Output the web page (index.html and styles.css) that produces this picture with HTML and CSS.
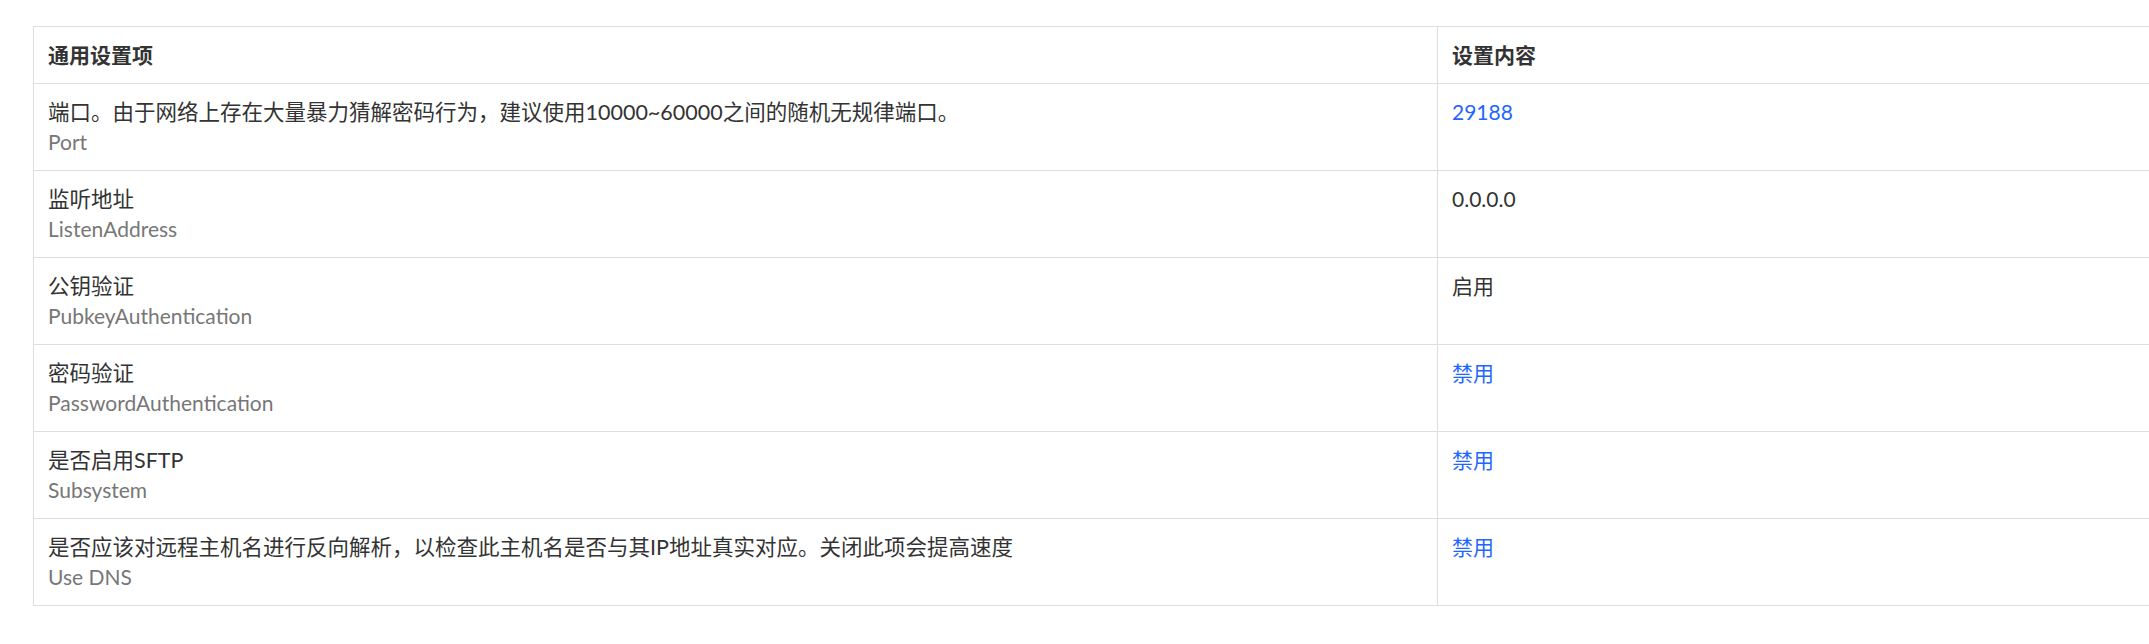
FILE: index.html
```html
<!DOCTYPE html>
<html lang="zh-CN">

<head>
    <meta charset="UTF-8">
    <meta name="viewport" content="width=device-width, initial-scale=1.0">
    <title>SSH 设置</title>
    <link rel="stylesheet" href="styles.css">
</head>

<body>
    <div class="table-wrap">
        <table class="setting-table">
            <colgroup>
                <col class="col-name">
                <col class="col-value">
            </colgroup>
            <thead>
                <tr>
                    <th>通用设置项</th>
                    <th>设置内容</th>
                </tr>
            </thead>
            <tbody>
                <tr>
                    <td>
                        <div class="item-title">端口。由于网络上存在大量暴力猜解密码行为，建议使用10000~60000之间的随机无规律端口。</div>
                        <div class="item-key">Port</div>
                    </td>
                    <td><a class="value-link" href="#">29188</a></td>
                </tr>
                <tr>
                    <td>
                        <div class="item-title">监听地址</div>
                        <div class="item-key">ListenAddress</div>
                    </td>
                    <td>0.0.0.0</td>
                </tr>
                <tr>
                    <td>
                        <div class="item-title">公钥验证</div>
                        <div class="item-key">PubkeyAuthentication</div>
                    </td>
                    <td>启用</td>
                </tr>
                <tr>
                    <td>
                        <div class="item-title">密码验证</div>
                        <div class="item-key">PasswordAuthentication</div>
                    </td>
                    <td><a class="value-link" href="#">禁用</a></td>
                </tr>
                <tr>
                    <td>
                        <div class="item-title">是否启用SFTP</div>
                        <div class="item-key">Subsystem</div>
                    </td>
                    <td><a class="value-link" href="#">禁用</a></td>
                </tr>
                <tr>
                    <td>
                        <div class="item-title">是否应该对远程主机名进行反向解析，以检查此主机名是否与其IP地址真实对应。关闭此项会提高速度</div>
                        <div class="item-key">Use DNS</div>
                    </td>
                    <td><a class="value-link" href="#">禁用</a></td>
                </tr>
            </tbody>
        </table>
    </div>
</body>

</html>
```

FILE: styles.css
```css
body {
    font-family: Lato, "Noto Sans CJK SC", sans-serif;
    background-color: #fff;
    color: #333;
    margin: 0;
    padding: 0;
}

.table-wrap {
    padding: 26px 0 0 33px;
    overflow: hidden;
}

.setting-table {
    width: 2160px;
    table-layout: fixed;
    border-collapse: collapse;
    font-size: 21px;
    line-height: 30px;
}

.col-name {
    width: 1404px;
}

.setting-table th,
.setting-table td {
    border: 1px solid #dedede;
    padding: 13px 14px;
    text-align: left;
    vertical-align: top;
}

.setting-table th {
    font-weight: bold;
    color: #333;
}

.item-title {
    color: #333;
    font-size: 21.5px;
}

.item-key {
    color: #777;
}

.value-link {
    color: #1f66ff;
    text-decoration: none;
}
```
